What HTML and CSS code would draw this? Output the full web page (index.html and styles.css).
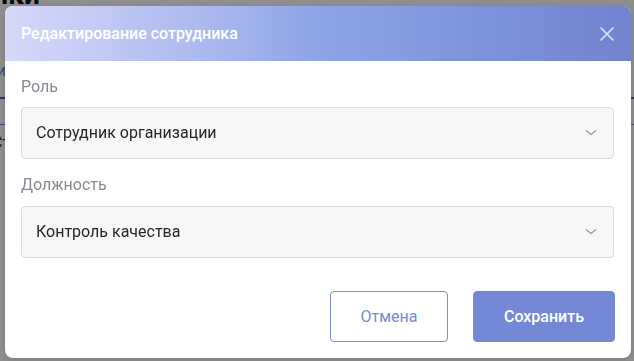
FILE: index.html
```html
<!DOCTYPE html>
<html lang="ru">
<head>
<meta charset="utf-8">
<title>Редактирование сотрудника</title>
<link rel="stylesheet" href="styles.css">
</head>
<body>
<div class="page">
  <h1 class="page-title">Сотрудники</h1>
  <div class="page-tabs"><span class="tab-active">Сотрудники</span></div>
  <div class="page-rule"></div>
  <div class="page-rule thin"></div>
  <div class="page-row">Страница</div>
</div>

<div class="overlay">
  <div class="dialog">
    <div class="dialog-header">
      <span class="dialog-title">Редактирование сотрудника</span>
      <button class="close-btn" aria-label="Закрыть">
        <svg width="14" height="14" viewBox="0 0 14 14"><path d="M1 1 L13 13 M13 1 L1 13" stroke="currentColor" stroke-width="1.6" fill="none" stroke-linecap="round"/></svg>
      </button>
    </div>
    <div class="dialog-body">
      <div class="field-label">Роль</div>
      <div class="select">
        <span class="select-value">Сотрудник организации</span>
        <svg class="chevron" width="12" height="8" viewBox="0 0 12 8"><polyline points="1,1.5 6,5.5 11,1.5" stroke="currentColor" stroke-width="1.1" fill="none"/></svg>
      </div>
      <div class="field-label second">Должность</div>
      <div class="select">
        <span class="select-value">Контроль качества</span>
        <svg class="chevron" width="12" height="8" viewBox="0 0 12 8"><polyline points="1,1.5 6,5.5 11,1.5" stroke="currentColor" stroke-width="1.1" fill="none"/></svg>
      </div>
    </div>
    <div class="dialog-footer">
      <button class="btn btn-outline">Отмена</button>
      <button class="btn btn-primary">Сохранить</button>
    </div>
  </div>
</div>
</body>
</html>
```

FILE: styles.css
```css
* { box-sizing: border-box; }

html, body {
  margin: 0;
  padding: 0;
  width: 634px;
  height: 361px;
  overflow: hidden;
  font-family: Roboto, "Noto Sans", sans-serif;
  background: #ffffff;
}

/* underlying page */
.page {
  margin-left: -118px;
}
.page-title {
  margin: -22px 0 0 0;
  font-size: 28px;
  line-height: 34px;
  font-weight: 700;
  color: #111;
}
.page-tabs {
  margin-top: 49px;
  padding-left: 35px;
  font-size: 16px;
  line-height: 20px;
  color: #6f83d8;
}
.page-rule {
  margin-top: 16px;
  height: 2px;
  background: #3f5fd0;
}
.page-rule.thin {
  margin-top: 25px;
  height: 1px;
  background: #8a7fd8;
}
.page-row {
  margin-top: 8px;
  padding-left: 110px;
  font-size: 16px;
  line-height: 20px;
  color: #333;
}

/* overlay */
.overlay {
  position: fixed;
  inset: 0;
  background: rgba(0, 0, 0, 0.44);
  padding: 6px 0 0 5px;
}

.dialog {
  width: 626px;
  background: #ffffff;
  border-radius: 8px;
  overflow: hidden;
  box-shadow: 0 2px 8px rgba(0, 0, 0, 0.15);
}

.dialog-header {
  height: 55px;
  display: flex;
  align-items: center;
  justify-content: space-between;
  padding: 0 17px 0 16px;
  background: linear-gradient(90deg, #d6d8f9 0%, #aebbef 30%, #8ea4e7 50%, #7f93dd 75%, #7283d0 100%);
}

.dialog-title {
  color: #ffffff;
  font-size: 16px;
  font-weight: 500;
  line-height: 20px;
}

.close-btn {
  border: 0;
  background: none;
  padding: 0;
  width: 14px;
  height: 14px;
  color: rgba(255, 255, 255, 0.78);
  display: flex;
  align-items: center;
  justify-content: center;
}

.dialog-body {
  padding: 16px 17px 0 16px;
}

.field-label {
  font-size: 16px;
  line-height: 20px;
  color: #878a93;
  margin-bottom: 10px;
}
.field-label.second {
  margin-top: 16px;
  margin-bottom: 11px;
}

.select {
  height: 52px;
  display: flex;
  align-items: center;
  justify-content: space-between;
  padding: 0 16px 0 14px;
  background: #f7f7f7;
  border: 1px solid #dcdce0;
  border-radius: 4px;
}

.select-value {
  font-size: 16px;
  line-height: 20px;
  color: #262626;
}

.chevron {
  color: #8e9199;
}

.dialog-footer {
  display: flex;
  justify-content: flex-end;
  gap: 25px;
  padding: 33px 16px 16px 16px;
}

.btn {
  height: 51px;
  border-radius: 4px;
  font-family: Roboto, "Noto Sans", sans-serif;
  font-size: 16px;
  line-height: 20px;
  cursor: pointer;
}

.btn-outline {
  width: 118px;
  background: #ffffff;
  border: 1px solid #7a8ddb;
  color: #7689d4;
  font-weight: 400;
}

.btn-primary {
  width: 142px;
  background: #7489d5;
  border: 1px solid #7489d5;
  color: #ffffff;
  font-weight: 500;
}
```
